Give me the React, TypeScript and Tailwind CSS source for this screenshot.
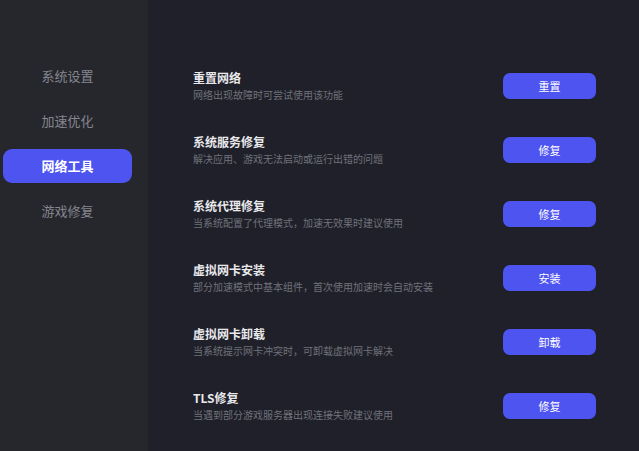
import React from "react"

const menu = ["系统设置", "加速优化", "网络工具", "游戏修复"]

const tools = [
  { title: "重置网络", desc: "网络出现故障时可尝试使用该功能", action: "重置" },
  { title: "系统服务修复", desc: "解决应用、游戏无法启动或运行出错的问题", action: "修复" },
  { title: "系统代理修复", desc: "当系统配置了代理模式，加速无效果时建议使用", action: "修复" },
  { title: "虚拟网卡安装", desc: "部分加速模式中基本组件，首次使用加速时会自动安装", action: "安装" },
  { title: "虚拟网卡卸载", desc: "当系统提示网卡冲突时，可卸载虚拟网卡解决", action: "卸载" },
  { title: "TLS修复", desc: "当遇到部分游戏服务器出现连接失败建议使用", action: "修复" },
]

export default function App() {
  const active = "网络工具"

  return (
    <div
      className="flex w-[639px] h-[451px] overflow-hidden bg-[#1f2029]"
      style={{ fontFamily: '"Noto Sans CJK SC", "Noto Sans", sans-serif' }}
    >
      <aside className="w-[148px] shrink-0 bg-[#26272d] pt-[59px] pl-[3px]">
        <nav className="flex flex-col gap-[11px]">
          {menu.map((name) => (
            <div
              key={name}
              className={
                name === active
                  ? "w-[129px] h-[34px] rounded-[9px] bg-[#4e54f0] flex items-center justify-center text-[13px] font-bold text-white"
                  : "w-[129px] h-[34px] flex items-center justify-center text-[13px] text-[#85868d]"
              }
            >
              {name}
            </div>
          ))}
        </nav>
      </aside>

      <main className="flex-1 pt-[54px] pl-[45px] pr-[43px]">
        {tools.map((t) => (
          <div key={t.title} className="h-16 flex items-center justify-between">
            <div className="flex flex-col gap-[1px]">
              <div className="text-[12px] leading-4 font-bold text-[#e9e9ec]">{t.title}</div>
              <div className="text-[10px] leading-4 text-[#70727b]">{t.desc}</div>
            </div>
            <button className="w-[93px] h-[26px] rounded-[7px] bg-[#4e54f0] text-[11px] text-white">
              {t.action}
            </button>
          </div>
        ))}
      </main>
    </div>
  )
}
